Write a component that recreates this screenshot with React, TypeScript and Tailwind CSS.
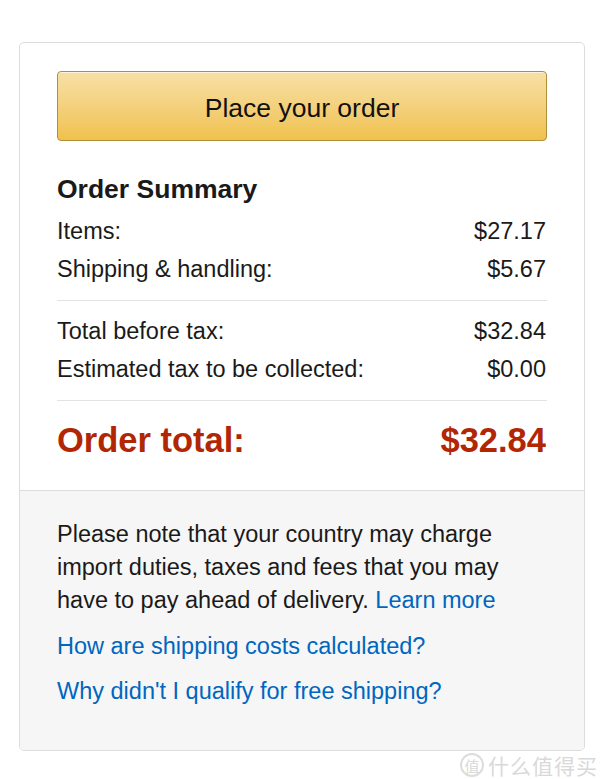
import React from "react";

const font = { fontFamily: '"Liberation Sans", Arial, sans-serif' };

function Row({ label, value }: { label: string; value: string }) {
  return (
    <div className="flex justify-between h-[38px] items-center leading-[38px] text-[23.5px] text-[#1a1a1a]">
      <span>{label}</span>
      <span className="pr-[1px]">{value}</span>
    </div>
  );
}

export default function App() {
  return (
    <div className="relative w-[600px] h-[779px] bg-white overflow-hidden" style={font}>
      <div className="pt-[42px] pl-[19px]">
        <div className="w-[566px] h-[709px] border border-[#dddddd] rounded-[5px] overflow-hidden flex flex-col">
          <div className="px-[37px] pt-[28px]">
            <button className="w-full h-[70px] pt-[5px] rounded-[4px] border border-[#b08f3a] bg-gradient-to-b from-[#f7e0a6] to-[#f0c14b] text-[26.5px] text-[#111] shadow-[inset_0_1px_0_rgba(255,255,255,0.6)]">
              Place your order
            </button>
            <div className="mt-[29px] h-[38px] leading-[38px] text-[26.5px] font-bold text-[#1a1a1a]">
              Order Summary
            </div>
            <div className="mt-[4px]">
              <Row label="Items:" value="$27.17" />
              <Row label="Shipping & handling:" value="$5.67" />
            </div>
            <div className="mt-[12px] h-px bg-[#e3e3e3]" />
            <div className="mt-[11px]">
              <Row label="Total before tax:" value="$32.84" />
              <Row label="Estimated tax to be collected:" value="$0.00" />
            </div>
            <div className="mt-[12px] h-px bg-[#e3e3e3]" />
            <div className="mt-[15px] mb-[26px] flex justify-between h-[48px] leading-[48px] text-[34.5px] font-bold text-[#b12704]">
              <span>Order total:</span>
              <span className="pr-[1px]">$32.84</span>
            </div>
          </div>
          <div className="flex-1 bg-[#f6f6f6] border-t border-[#dddddd] px-[37px] pt-[27px]">
            <p className="text-[23.5px] leading-[33px] text-[#1a1a1a]">
              Please note that your country may charge import duties, taxes and fees that you may have to pay ahead of delivery. <span className="text-[#0066c0]">Learn more</span>
            </p>
            <div className="mt-[13px] text-[23.5px] leading-[33px] text-[#0066c0]">
              How are shipping costs calculated?
            </div>
            <div className="mt-[12px] text-[23.5px] leading-[33px] text-[#0066c0]">
              Why didn't I qualify for free shipping?
            </div>
          </div>
        </div>
      </div>
      <div
        className="absolute right-[2px] bottom-[2px] flex items-center gap-[4px] text-[#d9d9d9]"
        style={{ fontFamily: '"Noto Sans CJK SC", sans-serif' }}
      >
        <span className="w-[24px] h-[24px] rounded-full border-2 border-[#dcdcdc] flex items-center justify-center text-[15px] leading-none">
          值
        </span>
        <span className="text-[21px] leading-none tracking-[1px]">什么值得买</span>
      </div>
    </div>
  );
}
